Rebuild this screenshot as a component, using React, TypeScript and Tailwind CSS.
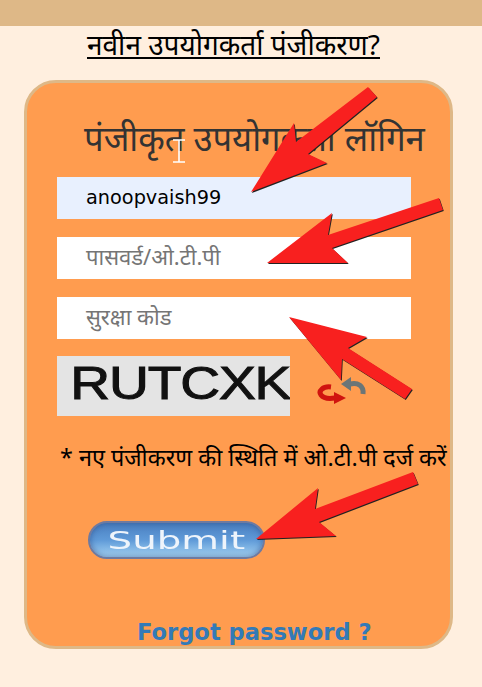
import React from 'react';

const hindi = 'font-["Noto_Sans","Liberation_Sans",sans-serif]';

function Arrows() {
  // the red annotation arrows painted over the form
  const arrows = [
    '368,87 377,97 308,154 327,163 251,192 294,123 296,142',
    '439,198 443,210 332,248 348,263 267,263 332,213 328,235',
    '289,317 367,337 348,348 412,389 405,399 342,359 341,380',
    '413,472 418,484 319,522 336,536 256,539 318,488 315,509',
  ];
  return (
    <svg className="absolute left-0 top-0 z-20 pointer-events-none" width="482" height="687">
      {arrows.map((p) => (
        <g key={p}>
          <polygon points={p} fill="#222" transform="translate(0.8 1)" />
          <polygon points={p} fill="#f8201f" />
        </g>
      ))}
    </svg>
  );
}

function RefreshIcon() {
  return (
    <svg width="50" height="30" viewBox="0 0 50 30" className="blur-[0.6px]">
      <path d="M46 19 C47 11 41 7 33 9" stroke="#6b7577" strokeWidth="5" fill="none" />
      <polygon points="34,2 34,16 24,9" fill="#6b7577" />
      <path d="M14 12 C6 11 1 16 4 20 C7 24 12 24 18 23" stroke="#d0140f" strokeWidth="5" fill="none" />
      <polygon points="17,17 17,29 29,23" fill="#d0140f" />
    </svg>
  );
}

function Field({ placeholder, value, filled }: { placeholder?: string; value?: string; filled?: boolean }) {
  return (
    <div
      className={`w-[354px] h-[42px] flex items-center pl-[29px] text-[22px] ${hindi} ${
        filled ? 'bg-[#e8f0fe] text-black' : 'bg-white text-[#757575] pb-[3px]'
      }`}
    >
      {value ? <span className='font-["DejaVu_Sans",sans-serif] text-[19.3px]'>{value}</span> : placeholder}
    </div>
  );
}

export default function App() {
  return (
    <div className="relative w-[482px] h-[687px] overflow-hidden bg-[#ffefdf]">
      <div className="h-[26px] bg-[#deb887]" />
      <div className={`h-[54px] flex justify-center pr-[15px] text-[28px] leading-[36px] text-black ${hindi}`}>
        <a className="underline underline-offset-[2px] h-fit">नवीन उपयोगकर्ता पंजीकरण?</a>
      </div>

      <div className="relative ml-[24px] w-[429px] h-[569px] rounded-[32px] border-[3px] border-[#deb887] bg-[#ff9c4f]">
        <h2 className={`pl-[57px] pt-[32px] h-[94px] text-[34.6px] leading-[46px] font-normal text-[#333] whitespace-nowrap ${hindi}`}>
          पंजीकृत उपयोगकर्ता लॉगिन
        </h2>

        <div className="ml-[30px] flex flex-col gap-[18px]">
          <Field value="anoopvaish99" filled />
          <Field placeholder="पासवर्ड/ओ.टी.पी" />
          <Field placeholder="सुरक्षा कोड" />
        </div>

        <div className="ml-[30px] mt-[17px] flex items-center">
          <div className='w-[233px] h-[60px] pb-[6px] bg-[#e4e4e4] overflow-hidden flex items-center justify-end font-["Liberation_Sans",sans-serif] font-normal text-[46px] leading-none text-[#111] [-webkit-text-stroke:1px_#111] blur-[0.5px]'>
            <span className="tracking-[-1px] scale-x-[1.2] origin-right whitespace-nowrap">RUTCXK</span>
          </div>
          <div className="ml-[27px] mt-[8px]">
            <RefreshIcon />
          </div>
        </div>

        <p className={`ml-[33px] mt-[25px] text-[23.4px] leading-[32px] text-black whitespace-nowrap ${hindi}`}>
          * नए पंजीकरण की स्थिति में ओ.टी.पी दर्ज करें
        </p>

        <div className="ml-[61px] mt-[48px] w-[177px] h-[38px] rounded-full border-2 border-[#6f7aa0] bg-gradient-to-b from-[#4a7fc0] via-[#5f9ad8] to-[#a6d4f2] shadow-[inset_0_0_6px_rgba(40,70,130,0.6)] flex items-center justify-center font-['DejaVu_Sans',sans-serif] text-[25px] leading-none text-[#eef4fb]">
          <span className="scale-x-[1.55]">Submit</span>
        </div>

        <a className="block mt-[60px] ml-[110px] font-['DejaVu_Sans',sans-serif] font-bold text-[22.6px] leading-[26px] text-[#337ab7] whitespace-nowrap">
          Forgot password ?
        </a>

        <svg className="absolute left-[146px] top-[56px] z-10" width="12" height="24" viewBox="0 0 12 24">
          <path d="M0 1H12M0 23H12M6 1V23" stroke="#fff" strokeWidth="1.6" fill="none" />
        </svg>
      </div>

      <Arrows />
    </div>
  );
}
